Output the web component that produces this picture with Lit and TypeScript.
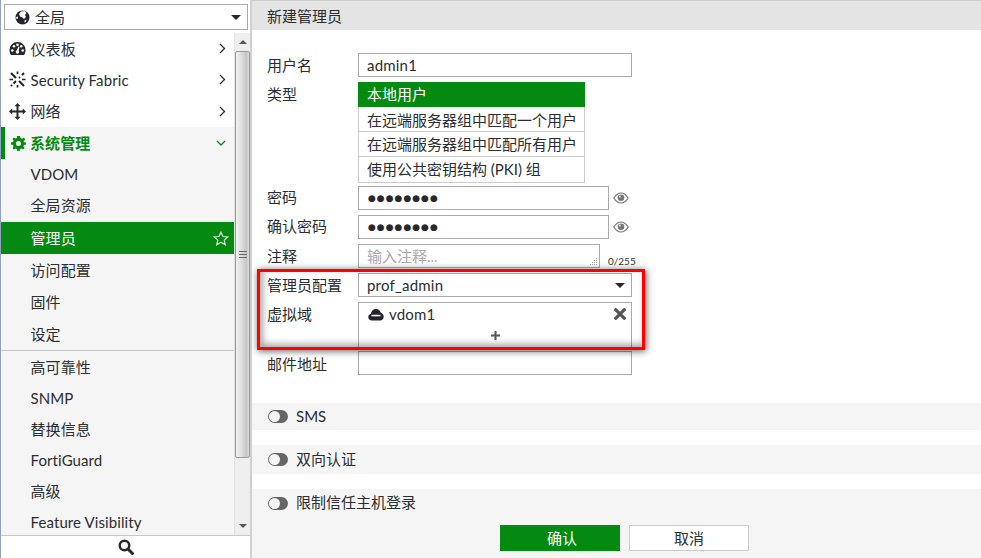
import { LitElement, html, css, svg } from "lit";
import { customElement } from "lit/decorators.js";

const I = {
  globe: svg`<svg width="15" height="15" viewBox="0 0 15 15"><circle cx="7.5" cy="7.5" r="7" fill="#22262c"/><path d="M6 1.5 L9.5 1 L11.5 3 L10 5 L11 7 L9 9 L7.5 7.5 L5 6.5 L4 4 Z" fill="#fff"/><path d="M9.5 10.5 L11.5 9.5 L11 12 L9.5 12.5 Z M1 7 L2.8 6.5 L3 8.5 L1.5 9 Z" fill="#fff"/></svg>`,
  gauge: svg`<svg width="17" height="15" viewBox="0 0 17 15"><path d="M8.5 1 A8 8 0 0 0 .5 9 C.5 11 1 12.6 2 14 H15 C16 12.6 16.5 11 16.5 9 A8 8 0 0 0 8.5 1 Z" fill="#26282c"/><circle cx="3.3" cy="9.5" r="1.3" fill="#fff"/><circle cx="5" cy="5.3" r="1.3" fill="#fff"/><circle cx="8.5" cy="3.8" r="1.3" fill="#fff"/><circle cx="12.2" cy="5.3" r="1.3" fill="#fff"/><circle cx="13.7" cy="9.5" r="1.3" fill="#fff"/><path d="M9.5 5.5 L10.5 6 L9.5 10 L7.5 10 Z" fill="#fff"/><circle cx="8.4" cy="11" r="1.7" fill="#fff"/></svg>`,
  fabric: svg`<svg width="17" height="17" viewBox="0 0 17 17" fill="none" stroke="#1f2125" stroke-width="2"><path d="M2 2 L7 7 M15 2 L13 4 M11 6 L10 7 M7 10 L4.5 12.5 M2 15 L3 14 M10 10 L15 15"/><path d="M.5 8.5 H4 M13 8.5 H16.5 M8.5 .5 V3 M8.5 14 V16.5" stroke-width="1.7"/></svg>`,
  move: svg`<svg width="17" height="17" viewBox="0 0 17 17"><path fill="#26282c" d="M8.5 0 L11.5 3.2 H9.5 V7.5 H13.8 V5.5 L17 8.5 L13.8 11.5 V9.5 H9.5 V13.8 H11.5 L8.5 17 L5.5 13.8 H7.5 V9.5 H3.2 V11.5 L0 8.5 L3.2 5.5 V7.5 H7.5 V3.2 H5.5 Z"/></svg>`,
  gear: svg`<svg width="15" height="15" viewBox="0 0 15 15"><path fill="#048a10" fill-rule="evenodd" d="M6 0 H9 L9.5 2 L11 2.7 L12.9 1.7 L13.3 2.1 L14.1 3.8 L12.5 5 L13 6.3 L15 6.5 V8.5 L13 9 L12.4 10.3 L13.4 12.2 L12.2 13.4 L10.3 12.4 L9 13 L8.7 15 H6.3 L6 13 L4.7 12.4 L2.8 13.4 L1.6 12.2 L2.6 10.3 L2 9 L0 8.5 V6.5 L2 6 L2.6 4.7 L1.6 2.8 L2.8 1.6 L4.7 2.6 L6 2 Z M7.5 5 A2.5 2.5 0 1 0 7.5 10 A2.5 2.5 0 1 0 7.5 5 Z"/></svg>`,
  star: svg`<svg width="16" height="15" viewBox="0 0 16 15"><path d="M8 1.2 L10 5.5 L14.8 6 L11.2 9.1 L12.3 13.8 L8 11.3 L3.7 13.8 L4.8 9.1 L1.2 6 L6 5.5 Z" fill="none" stroke="#d6ecd8" stroke-width="1.2"/></svg>`,
  eye: svg`<svg width="16" height="12" viewBox="0 0 16 12"><path d="M.8 6 C3 2.5 5.5 1 8 1 C10.5 1 13 2.5 15.2 6 C13 9.5 10.5 11 8 11 C5.5 11 3 9.5 .8 6 Z" fill="none" stroke="#777" stroke-width="1.2"/><circle cx="8" cy="5.8" r="3.3" fill="#777"/><circle cx="6.8" cy="4.6" r="1" fill="#fff"/></svg>`,
  cloud: svg`<svg width="16" height="13" viewBox="0 0 16 13"><path fill="#22262c" d="M4 12.5 C1.8 12.5 .3 11 .3 9 C.3 7.3 1.4 6.1 2.9 5.7 C3.3 3 5.4 1 8 1 C10.3 1 12.2 2.6 12.8 4.8 C14.5 5.2 15.7 6.8 15.7 8.7 C15.7 10.9 14.1 12.5 12 12.5 Z"/><rect x="3.5" y="6.8" width="9" height="1.5" fill="#fff"/></svg>`,
  search: svg`<svg width="16" height="16" viewBox="0 0 16 16"><circle cx="6.5" cy="6.5" r="4.8" fill="none" stroke="#26282c" stroke-width="2.4"/><path d="M10 10 L14.5 14.5" stroke="#26282c" stroke-width="3" stroke-linecap="round"/></svg>`,
  close: svg`<svg width="12" height="12" viewBox="0 0 12 12"><path d="M1.8 1.8 L10.2 10.2 M10.2 1.8 L1.8 10.2" stroke="#555" stroke-width="3.2" stroke-linecap="square"/></svg>`,
  plus: svg`<svg width="9" height="9" viewBox="0 0 9 9"><path d="M4.5 0 V9 M0 4.5 H9" stroke="#555" stroke-width="2"/></svg>`,
  right: svg`<svg width="7" height="11" viewBox="0 0 7 11"><path d="M1 1 L5.5 5.5 L1 10" fill="none" stroke="#2b2d31" stroke-width="1.3"/></svg>`,
  down: svg`<svg width="10" height="6" viewBox="0 0 10 6"><path d="M1 1 L5 5 L9 1" fill="none" stroke="#048a10" stroke-width="1.3"/></svg>`,
  grip: svg`<svg width="9" height="9" viewBox="0 0 9 9" fill="#aaa"><rect x="7" y="1" width="1" height="1"/><rect x="5" y="3" width="1" height="1"/><rect x="7" y="3" width="1" height="1"/><rect x="3" y="5" width="1" height="1"/><rect x="5" y="5" width="1" height="1"/><rect x="7" y="5" width="1" height="1"/><rect x="1" y="7" width="1" height="1"/><rect x="3" y="7" width="1" height="1"/><rect x="5" y="7" width="1" height="1"/><rect x="7" y="7" width="1" height="1"/></svg>`,
};

const TOP = [
  { t: "仪表板", i: I.gauge, h: "" },
  { t: "Security Fabric", i: I.fabric, h: "" },
  { t: "网络", i: I.move, h: "tall" },
];
const SUB1 = [
  { t: "VDOM", c: "lift" },
  { t: "全局资源", c: "lift" },
  { t: "管理员", c: "on" },
  { t: "访问配置", c: "tall" },
  { t: "固件", c: "tall" },
  { t: "设定", c: "tall" },
];
const SUB2 = [
  { t: "高可靠性", c: "tall" },
  { t: "SNMP", c: "lift" },
  { t: "替换信息", c: "lift" },
  { t: "FortiGuard", c: "lift" },
  { t: "高级", c: "lift" },
  { t: "Feature Visibility", c: "lift" },
];
const TYPES = ["本地用户", "在远端服务器组中匹配一个用户", "在远端服务器组中匹配所有用户", "使用公共密钥结构 (PKI) 组"];

@customElement("app-root")
export class AppRoot extends LitElement {
  static styles = css`
    :host { display: block; width: 981px; height: 558px; overflow: hidden; background: #fff; color: #2b2d30;
      font: 15px/24px Lato, "Noto Sans CJK SC", sans-serif; }
    * { box-sizing: border-box; }
    svg { display: block; flex: none; }
    .app { display: flex; height: 558px; }

    .side { width: 252px; flex: none; display: flex; flex-direction: column; border-left: 1px solid #8fa3bd; border-right: 2px solid #d0d0d0; }
    .scope { height: 33px; flex: none; padding: 4px 2px 3px 3px; }
    .scope-box { height: 26px; border: 1.5px solid #aaa; display: flex; align-items: center; padding: 0 6px 0 10px; gap: 5px; }
    .scope-box span { flex: 1; }
    .caret { width: 0; height: 0; border: 5px solid transparent; border-top: 5px solid #26282c; border-bottom: 0; }
    .menuwrap { flex: 1; min-height: 0; display: flex; border-bottom: 1px solid #c8c8c8; }
    .list { width: 233px; flex: none; overflow: hidden; background: #f5f5f5; letter-spacing: .1px; }
    .item { height: 31px; display: flex; align-items: center; padding-left: 29.5px; }
    .item.tall { height: 32px; }
    .item.lift { padding-bottom: 1px; }
    .item.top { background: #fff; padding-left: 8px; padding-right: 8px; }
    .item .ic { width: 17px; height: 17px; display: flex; align-items: center; justify-content: center; margin-right: 4.5px; flex: none; }
    .item .lb { flex: 1; white-space: nowrap; }
    .item.sys { height: 32px; color: #048a10; font-weight: 700; border-left: 4px solid #048a10; padding-left: 5px; padding-right: 8px; background: #f5f5f5; }
    .item.sys .ic { margin-right: 3px; }
    .item.on { height: 32px; margin-top: 1px; background: #048a10; color: #fff; padding-right: 5px; }
    .sep { height: 1px; background: #c8c8c8; }
    .bar { width: 16px; flex: none; background: #efefef; border-left: 1px solid #e2e2e2; display: flex; flex-direction: column; align-items: center; }
    .arrow { height: 18px; flex: none; display: flex; align-items: center; justify-content: center; }
    .arrow i { width: 0; height: 0; border: 4px solid transparent; }
    .arrow.up i { border-bottom: 4px solid #555; border-top: 0; }
    .arrow.dn i { border-top: 4px solid #555; border-bottom: 0; }
    .thumb { width: 15px; height: 407px; border: 1px solid #9a9a9a; border-radius: 2px;
      background: linear-gradient(90deg, #f0f0f0, #e4e4e4 30%, #c6c6c8 80%, #dcdcdc); display: flex; align-items: center; justify-content: center; }
    .grip { width: 8px; height: 7px; border-top: 1px solid #666; border-bottom: 1px solid #666; }
    .grip::after { content: ""; display: block; margin-top: 2px; height: 1px; background: #666; }
    .track { flex: 1; }
    .find { height: 22px; flex: none; display: flex; align-items: center; justify-content: center; background: #fff; }

    .main { flex: 1; min-width: 0; position: relative; display: flex; flex-direction: column; }
    .head { height: 30px; flex: none; background: #e4e4e4; border-top: 1px solid #ccc; padding: 0 15px; display: flex; align-items: center; }
    .form { padding: 23px 0 0 15px; display: flex; flex-direction: column; }
    .row { display: flex; align-items: flex-start; margin-top: 5px; }
    .row.first { margin-top: 0; }
    .row.g3 { margin-top: 3px; }
    .lab { width: 91px; flex: none; height: 24px; line-height: 24px; }
    .lab.up { line-height: 22px; }
    .lab.dn { line-height: 26px; }
    .field { width: 274px; height: 24px; border: 1px solid #aaa; background: #fff; padding: 0 8px; line-height: 22px; display: flex; align-items: center; letter-spacing: .2px; }
    .field.pw { width: 251px; }
    .field.note { width: 242px; color: #aaa; position: relative; letter-spacing: 0; }
    .dots { font: 9px/22px "DejaVu Sans", sans-serif; color: #26282c; letter-spacing: 1px; padding-left: 1px; }
    .eye { margin: 6px 0 0 4px; display: block; height: 12px; }
    .gripbox { position: absolute; right: 1px; bottom: 1px; width: 9px; height: 9px; }
    .count { font-size: 10px; line-height: 12px; margin: 11px 0 0 8px; color: #333; }
    .fsel { justify-content: space-between; padding-right: 6px; }
    .types { display: flex; flex-direction: column; width: 227px; }
    .types div { height: 25px; border: 1px solid #ccc; border-top: 0; padding: 0 8px; line-height: 24px; white-space: nowrap; }
    .types div:first-child { background: #048a10; color: #fff; border: 0; line-height: 25px; padding-left: 9px; }
    .types div:nth-child(2) { line-height: 26px; }
    .types div:last-child { height: 26px; }
    .vbox { width: 274px; height: 46px; border: 1px solid #aaa; display: flex; flex-direction: column; padding: 0 5px 0 9px; }
    .vtop { height: 22px; display: flex; align-items: center; gap: 5px; }
    .vtop span { flex: 1; letter-spacing: .2px; }
    .vadd { height: 21px; display: flex; align-items: center; justify-content: center; padding-right: 4px; }
    .sec { background: #f5f5f5; display: flex; align-items: center; padding-left: 16px; gap: 7px; margin-top: 15px; }
    .sec span { margin-bottom: 2px; }
    .sec.a { height: 27px; margin-top: 28px; }
    .sec.b { height: 29px; }
    .last { flex: 1; margin-top: 15px; background: #f5f5f5; display: flex; flex-direction: column; }
    .last .sec { height: 28px; margin: 0; }
    .tog { width: 20px; height: 13px; border-radius: 7px; background: #666; position: relative; flex: none; margin-right: 1px; }
    .tog::before { content: ""; position: absolute; left: 1px; top: 1px; width: 11px; height: 11px; border-radius: 50%; background: #f5f5f5; }
    .btns { display: flex; gap: 9px; margin: 8px 0 0 248px; }
    .btn { width: 120px; height: 26px; display: flex; align-items: center; justify-content: center; padding-bottom: 1px; }
    .ok { background: #048a10; color: #fff; padding-left: 4px; }
    .no { background: #fff; border: 1px solid #ccc; }
    .mark { position: absolute; left: 5px; top: 269px; width: 388px; height: 81px; border: 3.5px solid #f00;
      box-shadow: 1px 1px 7px rgba(0,0,0,.65), inset 3px -3px 7px rgba(0,0,0,.35); pointer-events: none; }
  `;

  render() {
    return html`<div class="app">
      <aside class="side">
        <div class="scope"><div class="scope-box">${I.globe}<span>全局</span><i class="caret"></i></div></div>
        <div class="menuwrap">
          <div class="list">
            ${TOP.map(m => html`<div class="item top ${m.h}"><span class="ic">${m.i}</span><span class="lb">${m.t}</span>${I.right}</div>`)}
            <div class="item sys"><span class="ic">${I.gear}</span><span class="lb">系统管理</span>${I.down}</div>
            ${SUB1.map(m => html`<div class="item ${m.c}"><span class="lb">${m.t}</span>${m.c === "on" ? I.star : ""}</div>`)}
            <div class="sep"></div>
            ${SUB2.map(m => html`<div class="item ${m.c}"><span class="lb">${m.t}</span></div>`)}
          </div>
          <div class="bar">
            <div class="arrow up"><i></i></div>
            <div class="thumb"><div class="grip"></div></div>
            <div class="track"></div>
            <div class="arrow dn"><i></i></div>
          </div>
        </div>
        <div class="find">${I.search}</div>
      </aside>
      <main class="main">
        <div class="head">新建管理员</div>
        <div class="form">
          <div class="row first"><div class="lab">用户名</div><div class="field">admin1</div></div>
          <div class="row"><div class="lab">类型</div><div class="types">${TYPES.map(t => html`<div>${t}</div>`)}</div></div>
          <div class="row g3"><div class="lab up">密码</div><div class="field pw"><span class="dots">●●●●●●●●</span></div><span class="eye">${I.eye}</span></div>
          <div class="row"><div class="lab up">确认密码</div><div class="field pw"><span class="dots">●●●●●●●●</span></div><span class="eye">${I.eye}</span></div>
          <div class="row"><div class="lab">注释</div><div class="field note">输入注释...<span class="gripbox">${I.grip}</span></div><div class="count">0/255</div></div>
          <div class="row"><div class="lab">管理员配置</div><div class="field fsel">prof_admin<i class="caret"></i></div></div>
          <div class="row"><div class="lab">虚拟域</div><div class="vbox"><div class="vtop">${I.cloud}<span>vdom1</span>${I.close}</div><div class="vadd">${I.plus}</div></div></div>
          <div class="row g3"><div class="lab dn">邮件地址</div><div class="field"></div></div>
        </div>
        <div class="sec a"><i class="tog"></i><span>SMS</span></div>
        <div class="sec b"><i class="tog"></i><span>双向认证</span></div>
        <div class="last">
          <div class="sec"><i class="tog"></i><span>限制信任主机登录</span></div>
          <div class="btns"><div class="btn ok">确认</div><div class="btn no">取消</div></div>
        </div>
        <div class="mark"></div>
      </main>
    </div>`;
  }
}
